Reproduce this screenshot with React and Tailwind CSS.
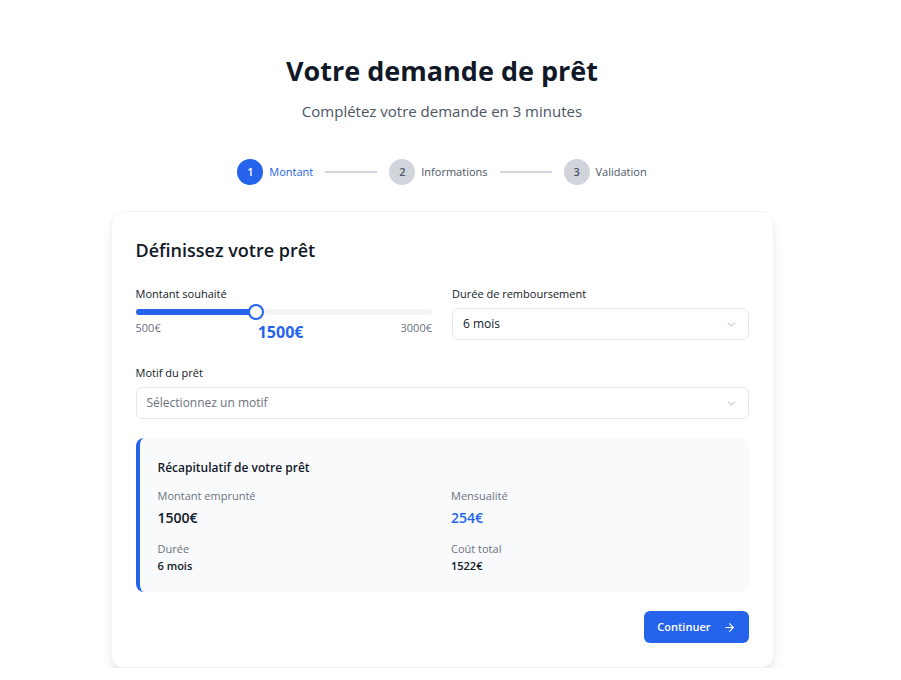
import React, { useState } from 'react';
import { ChevronDown, ArrowRight } from 'lucide-react';

const font = { fontFamily: '"Open Sans", "Noto Sans", sans-serif' };

const steps = [
  { n: 1, label: 'Montant' },
  { n: 2, label: 'Informations' },
  { n: 3, label: 'Validation' },
];

function Stepper({ current }) {
  return (
    <div className="flex items-center justify-center">
      {steps.map((s, i) => (
        <React.Fragment key={s.n}>
          {i > 0 && <div className="mx-3 h-0.5 w-[52px] bg-[#d1d5db]" />}
          <div className="flex items-center gap-1.5">
            <div
              className={
                s.n === current
                  ? 'flex h-[26px] w-[26px] items-center justify-center rounded-full bg-[#2563eb] text-[11px] font-semibold text-white'
                  : 'flex h-[26px] w-[26px] items-center justify-center rounded-full bg-[#d1d5db] text-[11px] font-semibold text-[#4b5563]'
              }
            >
              {s.n}
            </div>
            <span
              className={
                s.n === current
                  ? 'text-[11px] font-medium text-[#2563eb]'
                  : 'text-[11px] font-medium text-[#4b5563]'
              }
            >
              {s.label}
            </span>
          </div>
        </React.Fragment>
      ))}
    </div>
  );
}

function AmountSlider({ value, min, max }) {
  const pct = ((value - min) / (max - min)) * 100;
  return (
    <div>
      <div className="relative h-4">
        <div className="absolute left-0 right-0 top-[5px] h-[6px] rounded-full bg-[#f3f4f6]" />
        {/* thumb travels inside an inset track, like a native range input */}
        <div className="absolute inset-x-2 top-0 h-4">
          <div
            className="absolute -left-2 top-[5px] h-[6px] rounded-full bg-[#2563eb]"
            style={{ width: `calc(${pct}% + 8px)` }}
          />
          <div
            className="absolute top-0 h-4 w-4 -translate-x-1/2 rounded-full border-2 border-[#2563eb] bg-white"
            style={{ left: `${pct}%` }}
          />
        </div>
      </div>
      <div className="flex items-start justify-between">
        <span className="text-[11px] leading-4 text-[#6b7280]">{min}€</span>
        <span className="text-[16px] font-bold leading-6 text-[#2563eb]">{value}€</span>
        <span className="text-[11px] leading-4 text-[#6b7280]">{max}€</span>
      </div>
    </div>
  );
}

function Select({ value, placeholder }) {
  return (
    <div className="flex h-8 items-center justify-between rounded-md border border-[#e5e7eb] bg-white px-2.5">
      <span className={value ? 'text-[12px] text-[#111827]' : 'text-[12px] text-[#6b7280]'}>
        {value || placeholder}
      </span>
      <ChevronDown size={13} strokeWidth={1.5} className="text-[#9ca3af]" />
    </div>
  );
}

export default function App() {
  const [amount] = useState(1500);

  return (
    <div className="bg-white pr-[17px] pt-[53px] text-[#111827]" style={font}>
      <div className="text-center">
        <h1 className="text-[27px] font-bold leading-9 text-[#111827]">Votre demande de prêt</h1>
        <p className="mt-2 text-[15px] leading-7 text-[#4b5563]">Complétez votre demande en 3 minutes</p>
      </div>

      <div className="mt-[34px]">
        <Stepper current={1} />
      </div>

      <div className="mx-auto mt-[26px] w-[663px] rounded-xl border border-[#f3f4f6] bg-white p-6 shadow-lg">
        <h2 className="text-[18px] font-semibold leading-7">Définissez votre prêt</h2>

        <div className="mt-5 grid grid-cols-2 gap-5">
          <div>
            <label className="block text-[11px] font-medium leading-5">Montant souhaité</label>
            <AmountSlider value={amount} min={500} max={3000} />
          </div>
          <div>
            <label className="mb-1 block text-[11px] font-medium leading-5">Durée de remboursement</label>
            <Select value="6 mois" />
          </div>
        </div>

        <div className="mt-[19px]">
          <label className="mb-1 block text-[11px] font-medium leading-5">Motif du prêt</label>
          <Select placeholder="Sélectionnez un motif" />
        </div>

        <div className="mt-[19px] rounded-lg border-l-4 border-[#2563eb] bg-[#f9fafb] py-5 pl-[18px] pr-5">
          <h3 className="mb-2 text-[12px] font-semibold leading-5">Récapitulatif de votre prêt</h3>
          <div className="grid grid-cols-2 gap-x-4 gap-y-[9px]">
            <div>
              <p className="text-[11px] leading-5 text-[#6b7280]">Montant emprunté</p>
              <p className="text-[14px] font-semibold leading-6">{amount}€</p>
            </div>
            <div>
              <p className="text-[11px] leading-5 text-[#6b7280]">Mensualité</p>
              <p className="text-[14px] font-semibold leading-6 text-[#2563eb]">254€</p>
            </div>
            <div>
              <p className="text-[11px] leading-5 text-[#6b7280]">Durée</p>
              <p className="text-[11px] font-semibold leading-[13px]">6 mois</p>
            </div>
            <div>
              <p className="text-[11px] leading-5 text-[#6b7280]">Coût total</p>
              <p className="text-[11px] font-semibold leading-[13px]">1522€</p>
            </div>
          </div>
        </div>

        <div className="mt-[19px] flex justify-end">
          <button className="flex h-8 items-center gap-3 rounded-md bg-[#2563eb] px-[13px] text-[11px] font-semibold text-white">
            Continuer
            <ArrowRight size={13} strokeWidth={2} />
          </button>
        </div>
      </div>
    </div>
  );
}
